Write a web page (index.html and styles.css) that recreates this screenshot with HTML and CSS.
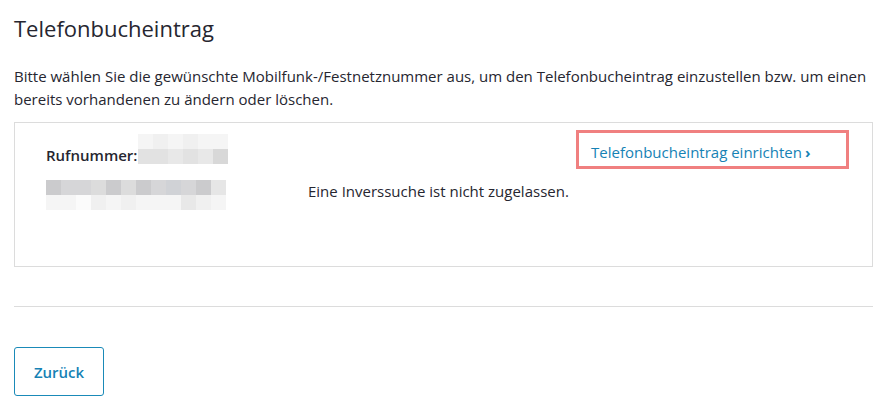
FILE: index.html
```html
<!DOCTYPE html>
<html lang="de">
<head>
<meta charset="utf-8">
<title>Telefonbucheintrag</title>
<link rel="stylesheet" href="styles.css">
</head>
<body>
<main class="page">
  <h1 class="title">Telefonbucheintrag</h1>
  <p class="intro">Bitte wählen Sie die gewünschte Mobilfunk-/Festnetznummer aus, um den Telefonbucheintrag einzustellen bzw. um einen bereits vorhandenen zu ändern oder löschen.</p>
  <section class="entry">
    <div class="number-row">
      <span class="label">Rufnummer:</span>
      <span class="pix pix-a">
        <i class="c1"></i><i class="c2"></i><i class="c1"></i><i class="c2"></i><i class="c1"></i><i class="c1"></i>
        <i class="c4"></i><i class="c4"></i><i class="c3"></i><i class="c4"></i><i class="c3"></i><i class="c5"></i>
      </span>
    </div>
    <div class="link-cell">
      <a class="setup-link" href="#">Telefonbucheintrag einrichten<span class="chev">›</span></a>
    </div>
    <span class="pix pix-b">
      <i class="d5"></i><i class="d3"></i><i class="d3"></i><i class="d2"></i><i class="d5"></i><i class="d2"></i><i class="d5"></i><i class="d3"></i><i class="d4"></i><i class="d3"></i><i class="d5"></i><i class="d1"></i>
      <i class="c1"></i><i class="c1"></i><i class="c0"></i><i class="c2"></i><i class="c1"></i><i class="c2"></i><i class="c1"></i><i class="c1"></i><i class="c1"></i><i class="c3"></i><i class="c2"></i><i class="c1"></i>
    </span>
    <p class="note">Eine Inverssuche ist nicht zugelassen.</p>
  </section>
  <hr class="divider">
  <button class="back" type="button">Zurück</button>
</main>
</body>
</html>
```
FILE: styles.css
```css
* { box-sizing: border-box; }
html, body { margin: 0; background: #fff; }
body {
  font-family: "Open Sans", "Liberation Sans", sans-serif;
  color: #262630;
}
.page {
  padding: 12px 21px 0 14px;
  width: 894px;
}
.title {
  margin: 0;
  font-size: 22px;
  font-weight: 400;
  line-height: 32px;
  letter-spacing: 0;
}
.intro {
  margin: 21px 0 0;
  font-size: 15px;
  line-height: 23px;
}
.entry {
  margin-top: 11px;
  border: 1px solid #dcdcdc;
  height: 145px;
  display: grid;
  grid-template-columns: 262px 1fr 273px;
  grid-template-rows: 39px 1fr;
  padding: 7px 23px 0 31px;
  column-gap: 0;
}
.number-row {
  grid-column: 1 / 3;
  display: flex;
  align-items: flex-end;
  padding-bottom: 3px;
}
.label {
  font-size: 15px;
  font-weight: 600;
  line-height: 22px;
  margin-right: 1px;
}
.pix {
  display: grid;
  grid-auto-rows: 15px;
}
.pix i { display: block; }
.pix-a {
  grid-template-columns: repeat(6, 15px);
  margin-bottom: 2px;
}
.pix-b {
  grid-column: 1;
  grid-row: 2;
  grid-template-columns: repeat(12, 15px);
  align-self: start;
  margin-top: 11px;
}
.c0 { background: #fbfbfb; }
.c1 { background: #f5f5f5; }
.c2 { background: #f0f0f0; }
.c3 { background: #e8e8e8; }
.c4 { background: #e2e2e2; }
.c5 { background: #d8d8d8; }
.d1 { background: #e6e6e6; }
.d2 { background: #dcdcdc; }
.d3 { background: #d6d6d8; }
.d4 { background: #d0d2d6; }
.d5 { background: #cbcbcd; }
.link-cell {
  grid-column: 3;
  grid-row: 1;
  border: 3px solid #f08080;
  display: flex;
  align-items: center;
  padding: 4px 0 0 12px;
}
.setup-link {
  color: #1682b5;
  text-decoration: none;
  font-size: 15px;
  font-weight: 500;
}
.chev {
  font-weight: 700;
  margin-left: 3px;
}
.note {
  grid-column: 2 / 4;
  grid-row: 2;
  margin: 11px 0 0;
  font-size: 15px;
  line-height: 22px;
}
.divider {
  margin: 39px 0 0;
  border: 0;
  border-top: 1px solid #dcdcdc;
}
.back {
  margin-top: 40px;
  width: 90px;
  height: 49px;
  border: 1px solid #1a8ab8;
  border-radius: 3px;
  background: #fff;
  color: #1682b5;
  font-family: inherit;
  font-size: 15px;
  font-weight: 600;
  padding: 0;
}
```
